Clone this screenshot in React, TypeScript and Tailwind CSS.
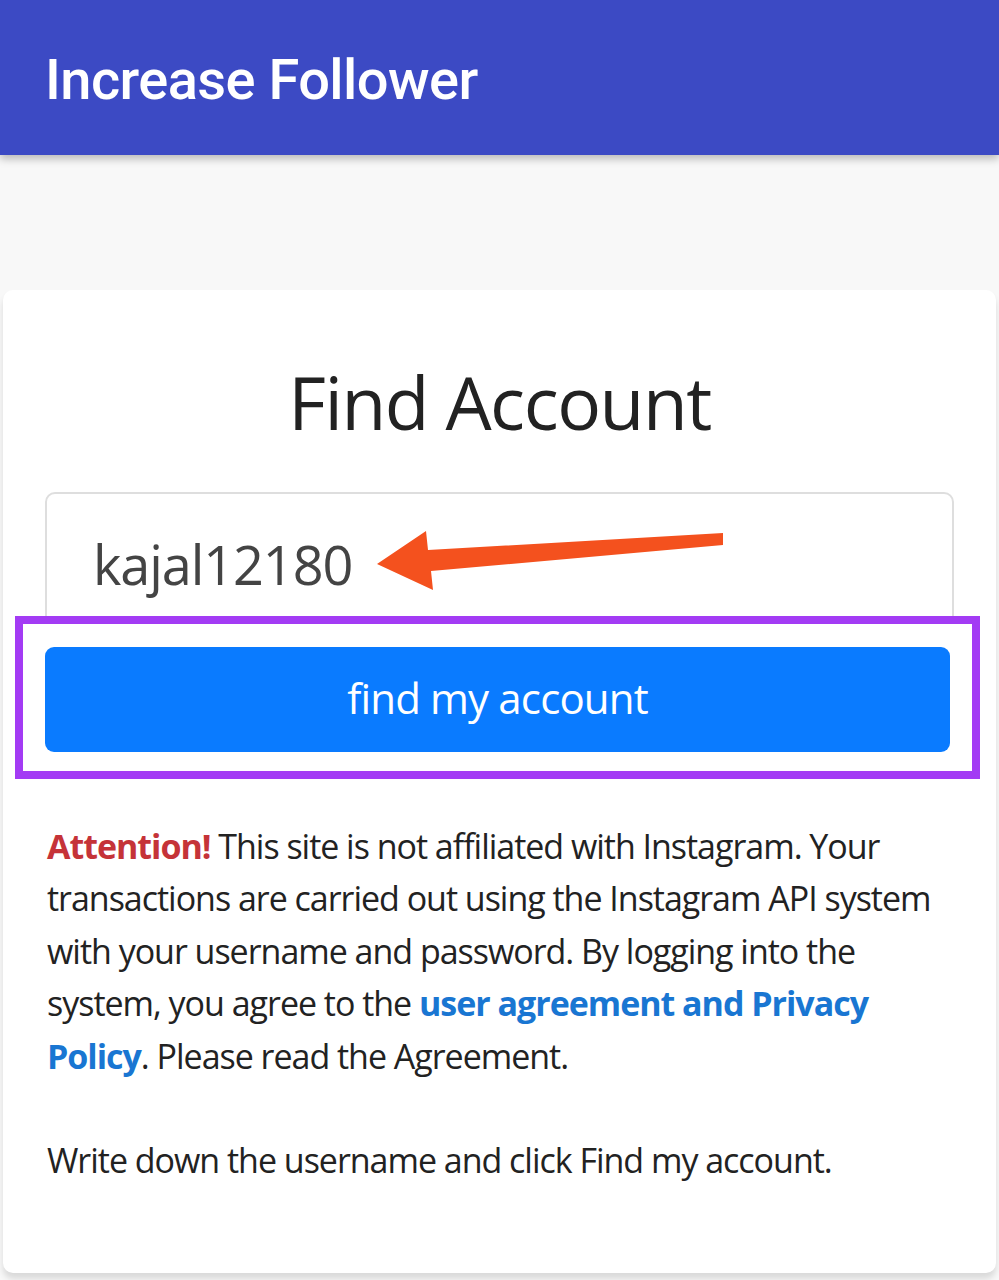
import { useState } from 'react'

// Red-orange pointer arrow drawn beside the username field
function PointerArrow() {
    return (
        <svg
            className="absolute left-[326px] top-[30px]"
            width="360"
            height="70"
            viewBox="0 0 360 70"
        >
            <polygon
                points="6,42 55,9 57,28 352,11 352,23 60,49 62,68"
                fill="#f4511e"
            />
        </svg>
    )
}

export default function App() {
    const [username, setUsername] = useState('kajal12180')

    return (
        <div className="min-h-[1280px] bg-[#f8f8f8] font-['Open_Sans',sans-serif]">
            {/* Top app bar */}
            <header className="h-[155px] bg-[#3c4ac4] flex items-center px-[45px] shadow-[0_4px_8px_rgba(0,0,0,0.25)]">
                <h1 className="text-white text-[56px] font-medium font-['Roboto',sans-serif] tracking-[-0.01em] mt-[4px]">
                    Increase Follower
                </h1>
            </header>

            <main className="pt-[135px] px-[3px]">
                <div className="bg-white rounded-[10px] shadow-[0_6px_6px_rgba(0,0,0,0.12)] pb-[86px]">
                    <h2 className="text-center text-[#222] text-[73px] pt-[68px] leading-[1.2] tracking-[-0.02em]">
                        Find Account
                    </h2>

                    <div className="relative mx-[42px] mt-[46px]">
                        <input
                            value={username}
                            onChange={(e) => setUsername(e.target.value)}
                            className="w-full h-[155px] border-2 border-[#dedede] rounded-[10px] pl-[46px] pb-[10px] text-[54px] text-[#444] tracking-[-0.02em] outline-none"
                        />
                        <PointerArrow />

                        {/* Highlight frame around the submit button */}
                        <div className="absolute left-[-30px] right-[-26px] top-[124px] h-[163px] border-[8px] border-[#a33bf4] bg-white pt-[23px] px-[22px]">
                            <button className="w-full h-[105px] bg-[#0a7bff] rounded-[9px] text-white text-[42px] tracking-[-0.02em] pb-[4px]">
                                find my account
                            </button>
                        </div>
                    </div>

                    <div className="px-[44px] mt-[173px] text-[#222] text-[34px] leading-[52.5px] tracking-[-0.03em]">
                        <p>
                            <span className="text-[#c53338] font-bold">Attention!</span> This site is not affiliated with Instagram. Your
                            <br />
                            transactions are carried out using the Instagram API system
                            <br />
                            with your username and password. By logging into the
                            <br />
                            system, you agree to the{' '}
                            <a href="#" className="text-[#1976d2] font-bold">
                                user agreement and Privacy
                                <br />
                                Policy
                            </a>
                            . Please read the Agreement.
                        </p>
                        <p className="mt-[52px]">Write down the username and click Find my account.</p>
                    </div>
                </div>
            </main>
        </div>
    )
}
